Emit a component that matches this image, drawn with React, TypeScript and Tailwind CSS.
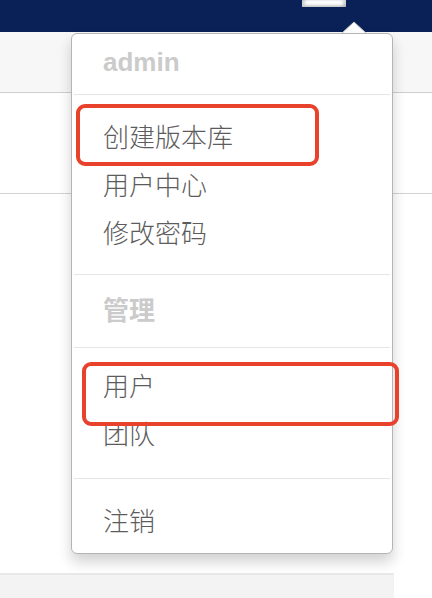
const FONT = { fontFamily: '"Helvetica Neue", "Liberation Sans", "Noto Sans CJK SC", sans-serif' };

function Divider() {
  return <div className="mx-[2px] h-px bg-[#e5e5e5]" />;
}

function Item({ label }: { label: string }) {
  return (
    <div className="flex h-[48px] items-center pl-[31px] text-[26px] font-light leading-none text-[#5c5c5c]">
      {label}
    </div>
  );
}

function Header({ label, className }: { label: string; className: string }) {
  return (
    <div
      className={`flex items-center pl-[31px] text-[26px] font-bold leading-none text-[#cbcbcb] ${className}`}
    >
      {label}
    </div>
  );
}

export default function App() {
  return (
    <div className="relative h-[598px] w-[432px] overflow-hidden bg-white" style={FONT}>
      {/* navbar */}
      <div className="flex h-[32px] items-start justify-end bg-[#0a2158] pr-[86px]">
        <div className="h-[7px] w-[44px] bg-white shadow-[inset_3px_-2px_3px_rgba(0,0,0,0.18),inset_-3px_0_3px_rgba(0,0,0,0.18)]" />
      </div>

      {/* page behind */}
      <div className="h-[61px] border-b border-[#cfcfcf] bg-[#f7f7f7]" />
      <div className="h-[101px] border-b border-[#d4d4d4]" />
      <div className="h-[379px]" />
      <div className="h-[25px] w-[394px] border-t-2 border-[#e8e8e8] bg-[#f3f3f3]" />

      {/* arrow */}
      <svg className="absolute left-[341px] top-[21px]" width="26" height="14" viewBox="0 0 26 14">
        <path d="M0 13 L13 1 L26 13 Z" fill="#fff" />
        <path d="M0.5 12.5 L13 1 L25.5 12.5" fill="none" stroke="#c9c9c9" strokeWidth="1" />
        <rect x="1" y="12" width="24" height="2" fill="#fff" />
      </svg>

      {/* dropdown */}
      <div className="absolute left-[71px] top-[33px] w-[322px] rounded-[6px] border border-[#b5b5b5] bg-white pb-[7px] shadow-[0_8px_14px_rgba(0,0,0,0.18)]">
        <Header label="admin" className="h-[60px] pb-[5px]" />
        <Divider />
        <div className="pb-[16px] pt-[19px]">
          <Item label="创建版本库" />
          <Item label="用户中心" />
          <Item label="修改密码" />
        </div>
        <Divider />
        <Header label="管理" className="h-[72px]" />
        <Divider />
        <div className="pb-[19px] pt-[15px]">
          <Item label="用户" />
          <Item label="团队" />
        </div>
        <Divider />
        <div className="pt-[19px]">
          <Item label="注销" />
        </div>
      </div>

      {/* highlight boxes */}
      <div className="absolute left-[76px] top-[104px] h-[62px] w-[243px] rounded-[9px] border-4 border-[#e8412c]" />
      <div className="absolute left-[82px] top-[362px] h-[64px] w-[317px] rounded-[9px] border-4 border-[#e8412c]" />
    </div>
  );
}
